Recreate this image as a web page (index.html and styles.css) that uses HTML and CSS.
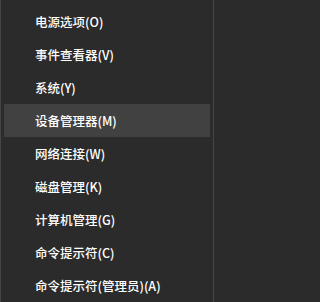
FILE: index.html
```html
<!DOCTYPE html>
<html lang="zh-CN">
<head>
<meta charset="utf-8">
<link rel="stylesheet" href="styles.css">
</head>
<body>
<ul class="menu">
  <li class="item">电源选项(O)</li>
  <li class="item">事件查看器(V)</li>
  <li class="item">系统(Y)</li>
  <li class="item active">设备管理器(M)</li>
  <li class="item">网络连接(W)</li>
  <li class="item">磁盘管理(K)</li>
  <li class="item">计算机管理(G)</li>
  <li class="item">命令提示符(C)</li>
  <li class="item">命令提示符(管理员)(A)</li>
</ul>
</body>
</html>
```
FILE: styles.css
```css
html, body {
  margin: 0;
  padding: 0;
  background: #2b2b2b;
  height: 100%;
  overflow: hidden;
}
.menu {
  list-style: none;
  margin: 0;
  padding: 5px 3px 0 3px;
  box-sizing: border-box;
  width: 214px;
  height: 302px;
  border-left: 1px solid #464646;
  border-right: 1px solid #464646;
  font-family: "Noto Sans CJK SC", "Noto Sans", sans-serif;
  font-size: 12.5px;
  font-weight: 500;
  color: #ffffff;
}
.item {
  height: 33px;
  line-height: 33px;
  padding-left: 31px;
  white-space: nowrap;
}
.active {
  background: #414141;
}
```
